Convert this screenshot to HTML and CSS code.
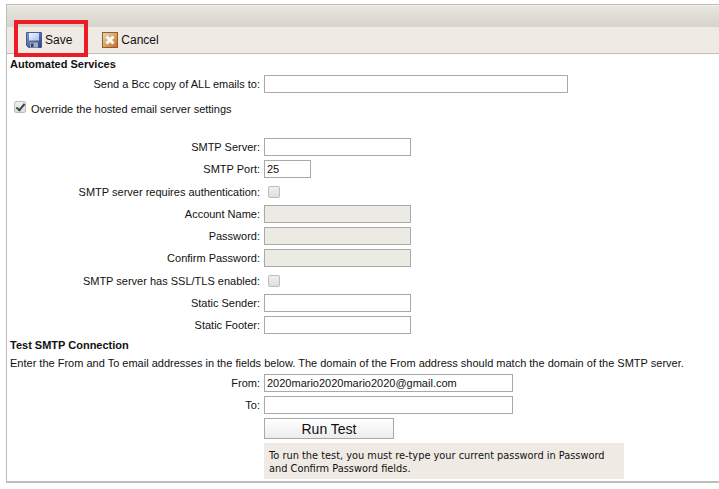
FILE: index.html
```html
<!DOCTYPE html>
<html lang="en">
<head>
  <meta charset="UTF-8">
  <title>Automated Services</title>
  <link rel="stylesheet" href="styles.css">
</head>
<body>
  <div class="frame">
    <div class="titlebar"></div>
    <div class="toolbar">
      <a class="tool tool-save">
        <svg width="16" height="16" viewBox="0 0 16 16">
          <defs>
            <linearGradient id="disk" x1="0" y1="0" x2="1" y2="1">
              <stop offset="0" stop-color="#7f9ad0"/>
              <stop offset="1" stop-color="#2c3f80"/>
            </linearGradient>
            <linearGradient id="disklabel" x1="0" y1="0" x2="1" y2="1">
              <stop offset="0" stop-color="#f2f6fd"/>
              <stop offset="1" stop-color="#a9c2ea"/>
            </linearGradient>
          </defs>
          <path d="M0.5 0.5H15.5V15.5H2.5L0.5 13.5Z" fill="url(#disk)" stroke="#4a5a94"/>
          <rect x="3" y="1" width="10" height="7.5" fill="url(#disklabel)"/>
          <rect x="4" y="10.5" width="8" height="5" fill="#a8acc0"/>
          <rect x="5" y="11.5" width="2.5" height="3.5" fill="#34406e"/>
        </svg>
        <span>Save</span>
      </a>
      <a class="tool tool-cancel">
        <svg width="16" height="16" viewBox="0 0 16 16">
          <defs>
            <linearGradient id="stop" x1="0" y1="0" x2="1" y2="1">
              <stop offset="0" stop-color="#cfe3c6"/>
              <stop offset="0.55" stop-color="#d2a060"/>
              <stop offset="1" stop-color="#c06a2a"/>
            </linearGradient>
          </defs>
          <rect x="0.5" y="0.5" width="15" height="15" fill="url(#stop)" stroke="#a8561f"/>
          <path d="M4.5 4.5l7 7M11.5 4.5l-7 7" stroke="#fbfbf4" stroke-width="3"/>
        </svg>
        <span>Cancel</span>
      </a>
    </div>
    <div class="content">
      <h3 class="heading">Automated Services</h3>
      <div class="row row-first">
        <label class="label">Send a Bcc copy of ALL emails to:</label>
        <input class="field field-wide" type="text">
      </div>
      <div class="override">
        <input class="check check-override" type="checkbox" checked>
        <label>Override the hosted email server settings</label>
      </div>
      <div class="smtp">
        <div class="row">
          <label class="label">SMTP Server:</label>
          <input class="field" type="text">
        </div>
        <div class="row">
          <label class="label">SMTP Port:</label>
          <input class="field field-port" type="text" value="25">
        </div>
        <div class="row row-check">
          <label class="label">SMTP server requires authentication:</label>
          <input class="check check-row" type="checkbox">
        </div>
        <div class="row">
          <label class="label">Account Name:</label>
          <input class="field field-off" type="text" disabled>
        </div>
        <div class="row">
          <label class="label">Password:</label>
          <input class="field field-off" type="text" disabled>
        </div>
        <div class="row">
          <label class="label">Confirm Password:</label>
          <input class="field field-off" type="text" disabled>
        </div>
        <div class="row row-check">
          <label class="label">SMTP server has SSL/TLS enabled:</label>
          <input class="check check-row" type="checkbox">
        </div>
        <div class="row">
          <label class="label">Static Sender:</label>
          <input class="field" type="text">
        </div>
        <div class="row">
          <label class="label">Static Footer:</label>
          <input class="field" type="text">
        </div>
      </div>
      <h3 class="heading heading-test">Test SMTP Connection</h3>
      <p class="intro">Enter the From and To email addresses in the fields below. The domain of the From address should match the domain of the SMTP server.</p>
      <div class="row">
        <label class="label">From:</label>
        <input class="field field-mail" type="text" value="2020mario2020mario2020@gmail.com">
      </div>
      <div class="row">
        <label class="label">To:</label>
        <input class="field field-mail" type="text">
      </div>
      <button class="run" type="button">Run Test</button>
      <div class="note">To run the test, you must re-type your current password in Password and Confirm Password fields.</div>
    </div>
    <div class="highlight"></div>
  </div>
</body>
</html>
```

FILE: styles.css
```css
html, body { height: 100%; margin: 0; overflow: hidden; background: #fff; }
body { font-family: "Liberation Sans", Arial, sans-serif; font-size: 11px; color: #111; }

.frame {
  position: relative; height: 479px; margin: 4px 0 0 6px; box-sizing: border-box;
  border-top: 1px solid #bdbdbd; border-left: 1px solid #bdbdbd; border-bottom: 2px solid #bdbdbd;
}
.titlebar {
  height: 22px; border-top: 1px solid #f4f2ec; box-sizing: border-box;
  background: linear-gradient(#e9e6de, #d6d3cb);
}
.toolbar {
  display: flex; align-items: center; height: 26px; padding-left: 19px;
  background: #efebe4; border-bottom: 1px solid #bdbdbd; font-size: 12px;
}
.tool { display: flex; align-items: center; gap: 3px; }
.tool-cancel { margin-left: 30px; }

.content { padding-left: 3px; }
.heading { margin: 0; font-size: 11px; line-height: 14px; font-weight: bold; }
.content > .heading:first-child { padding-top: 3px; }
.heading-test { margin-top: 2px; }

.row { display: flex; align-items: center; height: 22px; }
.row-first { margin-top: 2px; }
.row-check { height: 23px; }
.label { width: 250px; margin-right: 4px; text-align: right; flex-shrink: 0; }

.field {
  width: 147px; height: 18px; margin: 0; padding: 0 2px; box-sizing: border-box;
  border: 1px solid #a9a9a9; background: #fff;
  font: 11px "Liberation Sans", Arial, sans-serif; color: #111;
}
.field-wide { width: 304px; }
.field-port { width: 47px; }
.field-mail { width: 249px; }
.field-off { background: #ebebe4; }

.check {
  appearance: none; position: relative; width: 12px; height: 12px; margin: 0; box-sizing: border-box;
  border: 1px solid #bcbcbc; border-radius: 2px; background: linear-gradient(#f0f0f0, #dedede);
}
.check:checked::after {
  content: ""; position: absolute; left: 3px; top: 0; width: 3px; height: 7px;
  border: solid #444; border-width: 0 2px 2px 0; transform: rotate(40deg);
}
.check-row { margin-left: 4px; }
.check-override { margin-top: -5px; }

.override { display: flex; align-items: center; gap: 5px; height: 16px; margin: 6px 0 0 4px; }
.smtp { margin-top: 19px; }

.intro { margin: 4px 0 0; line-height: 15px; white-space: nowrap; }
.intro + .row { margin-top: 1px; }

.run {
  display: block; width: 130px; height: 21px; margin: 2px 0 0 254px; padding: 0;
  border: 1px solid #a9a9a9; background: linear-gradient(#fff, #ececec);
  font: 14px "Liberation Sans", Arial, sans-serif; color: #111;
}
.note {
  width: 360px; height: 36px; margin: 4px 0 0 254px; padding: 6px 5px 4px; box-sizing: border-box;
  background: #efebe4; line-height: 13px; font-family: "DejaVu Sans", sans-serif; font-size: 9.8px;
}

/* annotation on top of the screenshot */
.highlight {
  position: absolute; left: 7px; top: 15px; width: 74px; height: 37px; box-sizing: border-box;
  border: 4px solid #ed1c24;
}
```
